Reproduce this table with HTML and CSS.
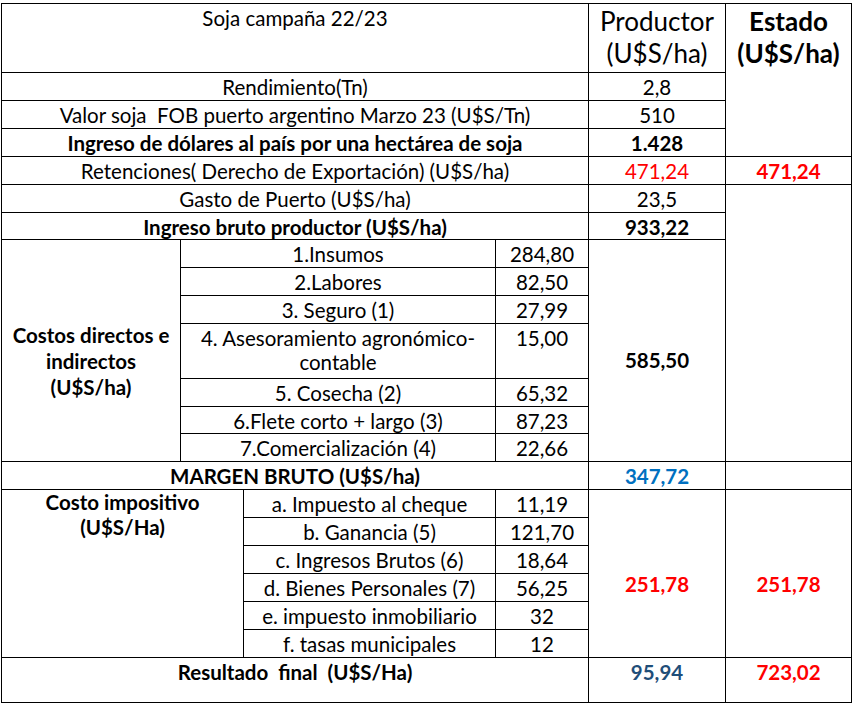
FILE: index.html
```html
<!DOCTYPE html>
<html lang="es">
<head>
<meta charset="utf-8">
<title>Soja campaña 22/23</title>
<link rel="stylesheet" href="styles.css">
</head>
<body>
<div class="sheet">
  <div class="cell c-label">Soja campaña 22/23</div>
  <div class="cell c-p head-col">Productor<br>(U$S/ha)</div>
  <div class="cell c-e head-col bold span4">Estado<br>(U$S/ha)</div>

  <div class="cell c-label">Rendimiento(Tn)</div>
  <div class="cell c-p">2,8</div>

  <div class="cell c-label">Valor soja  FOB puerto argentino Marzo 23 (U$S/Tn)</div>
  <div class="cell c-p">510</div>

  <div class="cell c-label bold">Ingreso de dólares al país por una hectárea de soja</div>
  <div class="cell c-p bold">1.428</div>

  <div class="cell c-label">Retenciones( Derecho de Exportación) (U$S/ha)</div>
  <div class="cell c-p red">471,24</div>
  <div class="cell c-e red bold">471,24</div>

  <div class="cell c-label">Gasto de Puerto (U$S/ha)</div>
  <div class="cell c-p">23,5</div>
  <div class="cell c-e span9"></div>

  <div class="cell c-label bold">Ingreso bruto productor (U$S/ha)</div>
  <div class="cell c-p bold">933,22</div>

  <div class="cell c-side span7 bold side-costos">Costos directos e<br>indirectos<br>(U$S/ha)</div>
  <div class="cell c-item7">1.Insumos</div>
  <div class="cell c-val">284,80</div>
  <div class="cell c-p span7 bold mid-costos">585,50</div>

  <div class="cell c-item7">2.Labores</div>
  <div class="cell c-val">82,50</div>
  <div class="cell c-item7">3. Seguro (1)</div>
  <div class="cell c-val">27,99</div>
  <div class="cell c-item7">4. Asesoramiento agronómico-<br>contable</div>
  <div class="cell c-val">15,00</div>
  <div class="cell c-item7">5. Cosecha (2)</div>
  <div class="cell c-val">65,32</div>
  <div class="cell c-item7">6.Flete corto + largo (3)</div>
  <div class="cell c-val">87,23</div>
  <div class="cell c-item7">7.Comercialización (4)</div>
  <div class="cell c-val">22,66</div>

  <div class="cell c-label bold">MARGEN BRUTO (U$S/ha)</div>
  <div class="cell c-p bold blue">347,72</div>
  <div class="cell c-e"></div>

  <div class="cell c-side2 span6 bold side-imp">Costo impositivo<br>(U$S/Ha)</div>
  <div class="cell c-item">a. Impuesto al cheque</div>
  <div class="cell c-val">11,19</div>
  <div class="cell c-p span6 bold red mid-imp">251,78</div>
  <div class="cell c-e span6 bold red mid-imp">251,78</div>

  <div class="cell c-item">b. Ganancia (5)</div>
  <div class="cell c-val">121,70</div>
  <div class="cell c-item">c. Ingresos Brutos (6)</div>
  <div class="cell c-val">18,64</div>
  <div class="cell c-item">d. Bienes Personales (7)</div>
  <div class="cell c-val">56,25</div>
  <div class="cell c-item">e. impuesto inmobiliario</div>
  <div class="cell c-val">32</div>
  <div class="cell c-item">f. tasas municipales</div>
  <div class="cell c-val">12</div>

  <div class="cell c-label bold">Resultado  final  (U$S/Ha)</div>
  <div class="cell c-p bold navy">95,94</div>
  <div class="cell c-e bold red">723,02</div>
</div>
</body>
</html>
```
FILE: styles.css
```css
html, body {
  margin: 0;
  padding: 0;
  background: #ffffff;
}

body {
  font-family: Lato, "Liberation Sans", sans-serif;
  color: #000000;
}

.sheet {
  box-sizing: border-box;
  width: 851px;
  margin: 3px 0 0 1px;
  padding: 1px;
  gap: 1px;
  background: #000000;
  display: grid;
  grid-template-columns: 178px 62px 251px 92px 136px 125px;
  grid-template-rows: 68px 27px 27px 27px 27px 27px 26px 27px 27px 27px 54px 27px 26px 27px 27px 27px 27px 27px 27px 27px 27px 44px;
}

.cell {
  background: #ffffff;
  text-align: center;
  font-size: 20.5px;
  line-height: 24px;
  padding-top: 2px;
  white-space: pre-wrap;
  overflow: hidden;
}

.c-label { grid-column: 1 / 5; }
.c-p { grid-column: 5; }
.c-e { grid-column: 6; }
.c-side { grid-column: 1; }
.c-side2 { grid-column: 1 / 3; }
.c-item7 { grid-column: 2 / 4; }
.c-item { grid-column: 3; }
.c-val { grid-column: 4; }

.span4 { grid-row: span 4; }
.span6 { grid-row: span 6; }
.span7 { grid-row: span 7; }
.span9 { grid-row: span 9; }

.bold { font-weight: 700; }
.red { color: #ff0000; }
.blue { color: #0070c0; }
.navy { color: #1f4e79; }

.head-col {
  font-size: 26px;
  line-height: 32px;
  padding-top: 1px;
}

.side-costos {
  line-height: 26px;
  padding-top: 82px;
}

.mid-costos {
  padding-top: 108px;
}

.side-imp {
  line-height: 25px;
  padding-top: 0;
}

.mid-imp {
  padding-top: 82px;
}
```
